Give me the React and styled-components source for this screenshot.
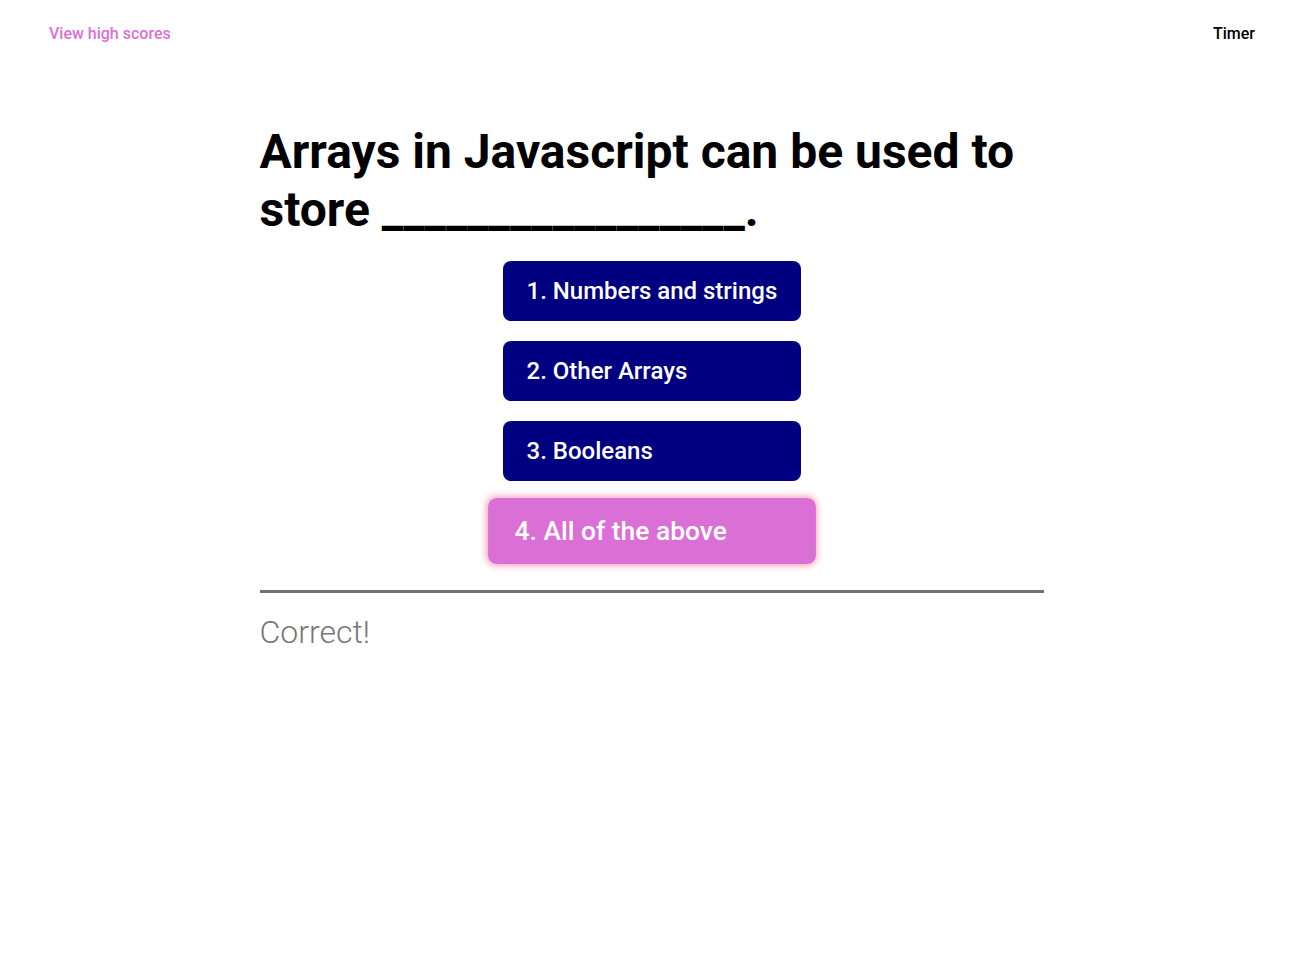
import React from "react";
import styled, { createGlobalStyle } from "styled-components";

const GlobalStyle = createGlobalStyle`
  body {
    margin: 0;
    font-family: Roboto, "Liberation Sans", sans-serif;
    background: #fff;
  }
`;

const Header = styled.header`
  display: flex;
  justify-content: space-between;
  align-items: center;
  padding: 24px 47px 0 49px;
  font-size: 16px;
  font-weight: 500;
`;

const HighScores = styled.a`
  color: orchid;
  text-decoration: none;
  cursor: pointer;
`;

const Timer = styled.div`
  color: #000;
`;

const Main = styled.main`
  width: 784px;
  margin: 0 auto;
  padding: 80px 0 0 1px;
`;

const Question = styled.h1`
  margin: 0;
  font-size: 48px;
  font-weight: 700;
  line-height: 58px;
  color: #000;
`;

const Choices = styled.div`
  display: flex;
  flex-direction: column;
  align-items: center;
  gap: 20px;
  margin-top: 22px;
`;

const Choice = styled.button`
  width: 298px;
  height: 60px;
  padding: 0 10px 0 24px;
  border: none;
  border-radius: 8px;
  text-align: left;
  white-space: nowrap;
  font-family: Roboto, "Liberation Sans", sans-serif;
  font-size: 24px;
  font-weight: 500;
  color: #fff;
  cursor: pointer;
  background: ${(p) => (p.$active ? "orchid" : "navy")};
  transform: ${(p) => (p.$active ? "scale(1.1)" : "none")};
  box-shadow: ${(p) => (p.$active ? "0 0 6px 1px rgba(240, 128, 160, 0.7)" : "none")};
`;

const Divider = styled.hr`
  margin: 29px 0 0;
  border: none;
  border-top: 3px solid #737373;
`;

const Result = styled.p`
  margin: 20px 0 0;
  font-size: 32px;
  font-weight: 300;
  color: #777;
`;

const answers = [
  "1. Numbers and strings",
  "2. Other Arrays",
  "3. Booleans",
  "4. All of the above",
];

export default function App() {
  return (
    <>
      <GlobalStyle />
      <Header>
        <HighScores>View high scores</HighScores>
        <Timer>Timer</Timer>
      </Header>
      <Main>
        <Question>Arrays in Javascript can be used to store _________________.</Question>
        <Choices>
          {answers.map((a, i) => (
            <Choice key={a} $active={i === 3}>
              {a}
            </Choice>
          ))}
        </Choices>
        <Divider />
        <Result>Correct!</Result>
      </Main>
    </>
  );
}
